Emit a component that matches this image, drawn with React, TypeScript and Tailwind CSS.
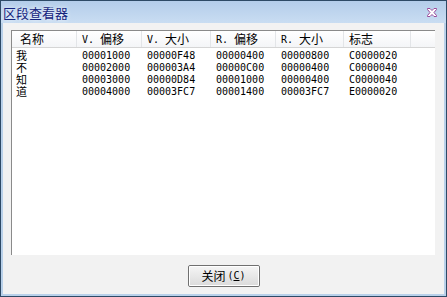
import React from 'react';

interface Row {
  name: string;
  vOff: string;
  vSize: string;
  rOff: string;
  rSize: string;
  flags: string;
}

const rows: Row[] = [
  { name: '我', vOff: '00001000', vSize: '00000F48', rOff: '00000400', rSize: '00000800', flags: 'C0000020' },
  { name: '不', vOff: '00002000', vSize: '000003A4', rOff: '00000C00', rSize: '00000400', flags: 'C0000040' },
  { name: '知', vOff: '00003000', vSize: '00000D84', rOff: '00001000', rSize: '00000400', flags: 'C0000040' },
  { name: '道', vOff: '00004000', vSize: '00003FC7', rOff: '00001400', rSize: '00003FC7', flags: 'E0000020' },
];

const cjk = "font-['Noto_Sans_CJK_SC',sans-serif]";
const mono = "font-['DejaVu_Sans_Mono','Noto_Sans_CJK_SC',monospace]";

function HeadCell({ w, prefix, label }: { w: string; prefix?: string; label: string }) {
  return (
    <div className={`${w} h-full shrink-0 flex items-center pl-[5px] border-r border-[#e3e5e8]`}>
      {prefix && <span className={`${mono} text-[10px] whitespace-pre`}>{prefix}</span>}
      <span className={`${cjk} text-[12px] leading-[12px]`}>{label}</span>
    </div>
  );
}

function Cell({ w, children }: { w: string; children: React.ReactNode }) {
  return (
    <div className={`${w} shrink-0 pl-[5px] ${mono} text-[10px] leading-[11px]`}>{children}</div>
  );
}

export default function App() {
  return (
    <div className="w-[447px] h-[297px] bg-[#b9d1ea] border border-[#2e4a66] flex flex-col overflow-hidden select-none">
      {/* title bar */}
      <div className="h-[22px] shrink-0 flex items-center justify-between pl-[2px] pr-[9px] bg-gradient-to-b from-[#b4cdea] to-[#c9ddf2]">
        <span className={`${cjk} text-[13px] leading-[13px] text-[#15237d] [text-shadow:0_0_4px_#ffffff]`}>
          区段查看器
        </span>
        <svg width="10" height="9" viewBox="0 0 10 9">
          <path
            d="M0.5 0.5h2.5l2 2l2-2h2.5v1l-2.5 3l2.5 3v1h-2.5l-2-2l-2 2h-2.5v-1l2.5-3l-2.5-3z"
            fill="#ffffff"
            stroke="#9a4a9a"
            strokeWidth="1"
          />
        </svg>
      </div>

      {/* client area */}
      <div className="flex-1 mx-[2px] mb-[2px] bg-[#f2f2f2] flex flex-col items-center pt-[7px]">
        <div className="self-stretch ml-[8px] mr-[9px] flex-1 bg-white border-l border-t border-[#8a8a8a] flex flex-col">
          <div className="h-[17px] shrink-0 flex bg-gradient-to-b from-white to-[#f4f5f7] border-b border-[#d5d5d5] text-black">
            <div className="w-[65px] h-full shrink-0 flex items-center pl-[8px] border-r border-[#e3e5e8]">
              <span className={`${cjk} text-[12px] leading-[12px]`}>名称</span>
            </div>
            <HeadCell w="w-[65px]" prefix="V. " label="偏移" />
            <HeadCell w="w-[69px]" prefix="V. " label="大小" />
            <HeadCell w="w-[65px]" prefix="R. " label="偏移" />
            <HeadCell w="w-[68px]" prefix="R. " label="大小" />
            <HeadCell w="w-[67px]" label="标志" />
            <div className="flex-1" />
          </div>
          <div className="flex flex-col pt-[1px] text-black">
            {rows.map((r) => (
              <div key={r.name} className="h-[12px] flex items-center">
                <div className={`w-[65px] shrink-0 pl-[4px] ${cjk} text-[11px] leading-[11px]`}>{r.name}</div>
                <Cell w="w-[65px]">{r.vOff}</Cell>
                <Cell w="w-[69px]">{r.vSize}</Cell>
                <Cell w="w-[65px]">{r.rOff}</Cell>
                <Cell w="w-[68px]">{r.rSize}</Cell>
                <Cell w="w-[67px]">{r.flags}</Cell>
              </div>
            ))}
          </div>
        </div>

        <button className="mt-[10px] mb-[7px] w-[72px] h-[22px] rounded-[2px] border border-[#707070] p-0">
          <div className="w-full h-full rounded-[1px] border border-white bg-gradient-to-b from-[#f4f4f4] to-[#dcdcdc] flex items-center justify-center text-black">
            <span className={`${cjk} text-[12px] leading-[12px]`}>关闭</span>
            <span className={`${mono} text-[10px] leading-[12px] ml-[2px]`}>
              (<span className="underline">C</span>)
            </span>
          </div>
        </button>
      </div>
    </div>
  );
}
